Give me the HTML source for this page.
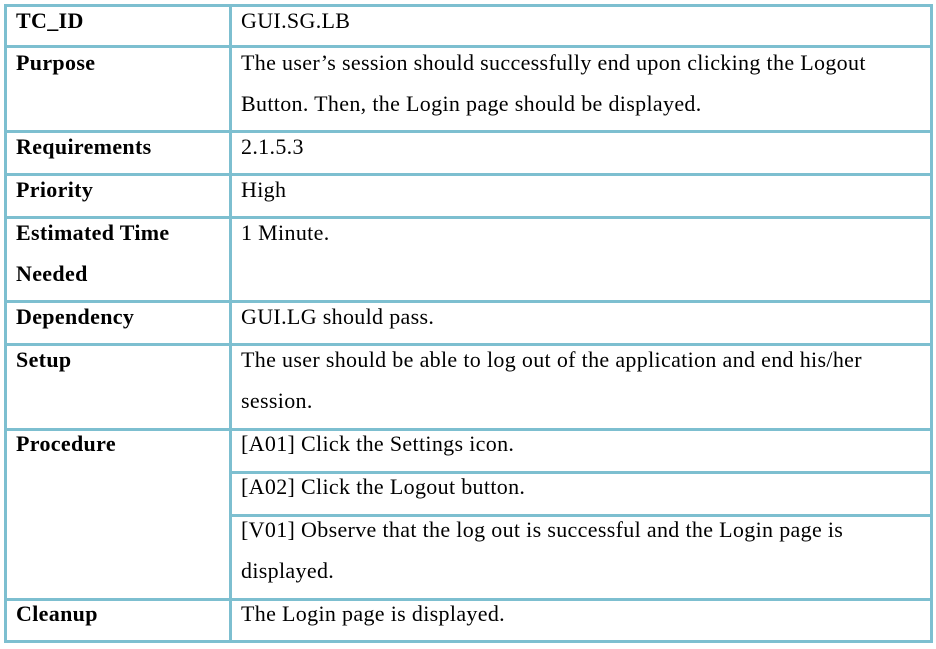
<!DOCTYPE html>
<html><head><style>
body{margin:0;width:936px;height:649px;background:#fff;position:relative;overflow:hidden;font-family:"Liberation Serif",serif;font-size:22px;letter-spacing:0.33px;color:#000}
.h{position:absolute;height:3px;background:#7dbfd0}
.v{position:absolute;width:3px;background:#7dbfd0}
.t{position:absolute;line-height:41px;white-space:nowrap}
.b{font-weight:bold}
</style></head><body>
<div class="h" style="left:5px;width:928px;top:4px"></div>
<div class="h" style="left:5px;width:928px;top:45px"></div>
<div class="h" style="left:5px;width:928px;top:130px"></div>
<div class="h" style="left:5px;width:928px;top:173px"></div>
<div class="h" style="left:5px;width:928px;top:216px"></div>
<div class="h" style="left:5px;width:928px;top:300px"></div>
<div class="h" style="left:5px;width:928px;top:343px"></div>
<div class="h" style="left:5px;width:928px;top:428px"></div>
<div class="h" style="left:230px;width:703px;top:471px"></div>
<div class="h" style="left:230px;width:703px;top:514px"></div>
<div class="h" style="left:5px;width:928px;top:598px"></div>
<div class="h" style="left:5px;width:928px;top:640px"></div>
<div class="v" style="left:4px;top:4px;height:639px"></div>
<div class="v" style="left:229px;top:4px;height:639px"></div>
<div class="v" style="left:930px;top:4px;height:639px"></div>

<div class="t b" style="left:16px;top:0px">TC_ID</div>
<div class="t" style="left:241px;top:0px">GUI.SG.LB</div>
<div class="t b" style="left:16px;top:42px">Purpose</div>
<div class="t" style="left:241px;top:42px">The user’s session should successfully end upon clicking the Logout<br>Button. Then, the Login page should be displayed.</div>
<div class="t b" style="left:16px;top:126px">Requirements</div>
<div class="t" style="left:241px;top:126px">2.1.5.3</div>
<div class="t b" style="left:16px;top:169px">Priority</div>
<div class="t" style="left:241px;top:169px">High</div>
<div class="t b" style="left:16px;top:212px">Estimated Time<br>Needed</div>
<div class="t" style="left:241px;top:212px">1 Minute.</div>
<div class="t b" style="left:16px;top:296px">Dependency</div>
<div class="t" style="left:241px;top:296px">GUI.LG should pass.</div>
<div class="t b" style="left:16px;top:339px">Setup</div>
<div class="t" style="left:241px;top:339px">The user should be able to log out of the application and end his/her<br>session.</div>
<div class="t b" style="left:16px;top:423px">Procedure</div>
<div class="t" style="left:241px;top:423px">[A01] Click the Settings icon.</div>
<div class="t" style="left:241px;top:466px">[A02] Click the Logout button.</div>
<div class="t" style="left:241px;top:509px">[V01] Observe that the log out is successful and the Login page is<br>displayed.</div>
<div class="t b" style="left:16px;top:593px">Cleanup</div>
<div class="t" style="left:241px;top:593px">The Login page is displayed.</div>
</body></html>
